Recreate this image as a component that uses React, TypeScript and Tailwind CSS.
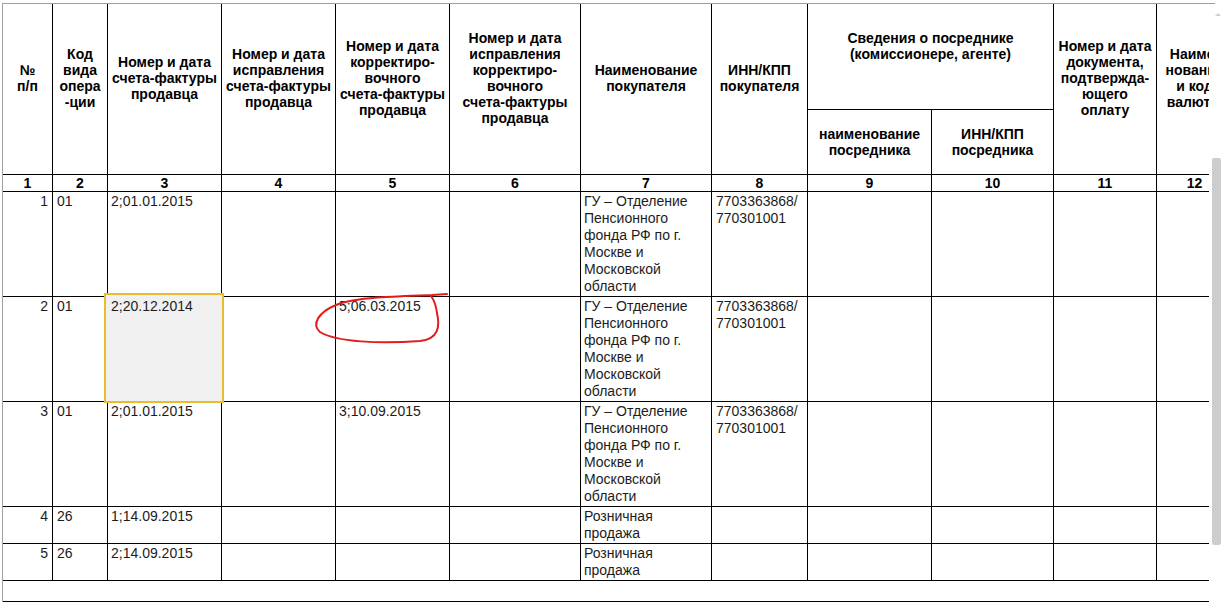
import React from "react";

type Row = {
  n: string;
  code: string;
  invoice: string;
  corr?: string;
  buyer: string[];
  inn?: string[];
  marked?: boolean;
};

const colWidths = [50, 55, 114, 114, 114, 131, 131, 96, 124, 122, 103, 76];

const pfr = ["ГУ – Отделение", "Пенсионного", "фонда РФ по г.", "Москве и", "Московской", "области"];
const pfrInn = ["7703363868/", "770301001"];

const rows: Row[] = [
  { n: "1", code: "01", invoice: "2;01.01.2015", buyer: pfr, inn: pfrInn },
  { n: "2", code: "01", invoice: "2;20.12.2014", corr: "5;06.03.2015", buyer: pfr, inn: pfrInn, marked: true },
  { n: "3", code: "01", invoice: "2;01.01.2015", corr: "3;10.09.2015", buyer: pfr, inn: pfrInn },
  { n: "4", code: "26", invoice: "1;14.09.2015", buyer: ["Розничная", "продажа"] },
  { n: "5", code: "26", invoice: "2;14.09.2015", buyer: ["Розничная", "продажа"] },
];

const th = "border-r border-b border-black text-center align-middle font-bold text-[14px] leading-[16px] whitespace-nowrap overflow-hidden p-0";
const td = "border-r border-b border-black align-top text-[14px] leading-[17px] text-[#1c1c1c] pt-[1px] pl-[3px] whitespace-nowrap";

const Lines = ({ items }: { items: string[] }) => (
  <>
    {items.map((s, i) => (
      <div key={i}>{s}</div>
    ))}
  </>
);

const Head = ({ lines, span, rowSpan, pb = true }: { lines: string[]; span?: number; rowSpan?: number; pb?: boolean }) => (
  <th colSpan={span} rowSpan={rowSpan} className={`${th} ${pb ? "pb-[22px]" : ""}`}>
    <Lines items={lines} />
  </th>
);

export default function App() {
  return (
    <div className="relative w-[1222px] h-[602px] overflow-hidden bg-white font-['Liberation_Sans',Arial,sans-serif] text-black">
      <div className="ml-[2px] mt-[3px] w-[1213px] h-[599px] border-l border-t border-[#a0a0a0]">
        <div className="w-[1206px] overflow-hidden">
          <table className="w-[1230px] table-fixed border-separate border-spacing-0">
            <colgroup>
              {colWidths.map((w, i) => (
                <col key={i} style={{ width: w }} />
              ))}
            </colgroup>
            <thead>
              <tr className="h-[106px]">
                <Head rowSpan={2} lines={["№", "п/п"]} />
                <Head rowSpan={2} lines={["Код", "вида", "опера", "-ции"]} />
                <Head rowSpan={2} lines={["Номер и дата", "счета-фактуры", "продавца"]} />
                <Head rowSpan={2} lines={["Номер и дата", "исправления", "счета-фактуры", "продавца"]} />
                <Head rowSpan={2} lines={["Номер и дата", "корректиро-", "вочного", "счета-фактуры", "продавца"]} />
                <Head rowSpan={2} lines={["Номер и дата", "исправления", "корректиро-", "вочного", "счета-фактуры", "продавца"]} />
                <Head rowSpan={2} lines={["Наименование", "покупателя"]} />
                <Head rowSpan={2} lines={["ИНН/КПП", "покупателя"]} />
                <Head span={2} lines={["Сведения о посреднике", "(комиссионере, агенте)"]} />
                <Head rowSpan={2} lines={["Номер и дата", "документа,", "подтвержда-", "ющего", "оплату"]} />
                <Head rowSpan={2} lines={["Наиме-", "нование", "и код", "валюты"]} />
              </tr>
              <tr className="h-[65px]">
                <Head pb={false} lines={["наименование", "посредника"]} />
                <Head pb={false} lines={["ИНН/КПП", "посредника"]} />
              </tr>
              <tr className="h-[17px]">
                {colWidths.map((_, i) => (
                  <th key={i} className="border-r border-b border-black text-center font-bold text-[14px] leading-[16px] p-0">
                    {i + 1}
                  </th>
                ))}
              </tr>
            </thead>
            <tbody>
              {rows.map((r) => (
                <tr key={r.n} className={r.buyer.length > 2 ? "h-[105px]" : "h-[37px]"}>
                  <td className={`${td} text-right pr-[4px]`}>{r.n}</td>
                  <td className={`${td} pl-[4px]`}>{r.code}</td>
                  <td className={`${td} ${r.marked ? "relative" : ""}`}>
                    {r.marked && (
                      <div className="absolute -left-[4px] -top-[4px] w-[120px] h-[110px] border-2 border-[#e9bb30] bg-[#f0f0f0]" />
                    )}
                    <span className="relative">{r.invoice}</span>
                  </td>
                  <td className={td} />
                  <td className={td}>{r.corr}</td>
                  <td className={td} />
                  <td className={td}>
                    <Lines items={r.buyer} />
                  </td>
                  <td className={`${td} pl-[4px]`}>{r.inn && <Lines items={r.inn} />}</td>
                  <td className={td} />
                  <td className={td} />
                  <td className={td} />
                  <td className={td} />
                </tr>
              ))}
              <tr className="h-[21px]">
                <td colSpan={12} className="border-b border-black" />
              </tr>
            </tbody>
          </table>
        </div>
      </div>

      {/* scrollbar */}
      <div className="absolute left-[1215px] top-[13px] w-0 h-0 border-l-[3px] border-r-[3px] border-b-[3px] border-l-transparent border-r-transparent border-b-[#cfcfcf]" />
      <div className="absolute left-[1212px] top-[158px] w-[9px] h-[387px] rounded-[2px] bg-[#cdcdcd]" />

      {/* red pen mark */}
      <svg className="absolute left-0 top-0 pointer-events-none" width="1222" height="602" viewBox="0 0 1222 602">
        <path
          d="M447 294 L432 295 C 400 296, 356 297, 336 305 C 319 312, 311 324, 320 332 C 336 342, 380 344, 420 341 C 439 339, 440 326, 437 313 C 436 305, 434 300, 431 296"
          fill="none"
          stroke="#e41b1b"
          strokeWidth="2"
          strokeLinecap="round"
        />
      </svg>
    </div>
  );
}
